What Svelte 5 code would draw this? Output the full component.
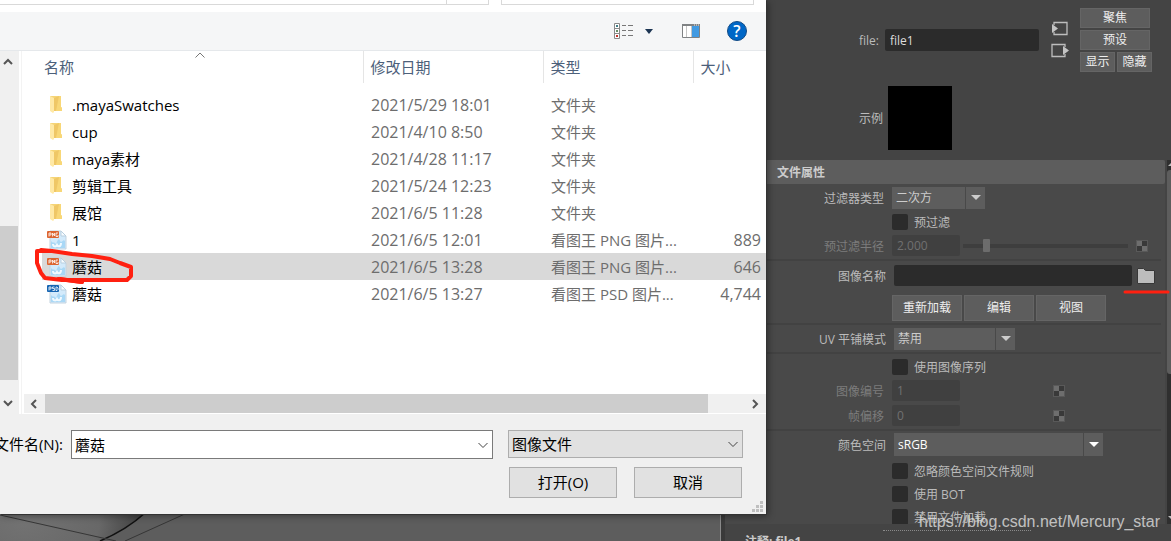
<script>
  const files = [
    { name: '.mayaSwatches', date: '2021/5/29 18:01', type: '文件夹', size: '', icon: 'folder' },
    { name: 'cup', date: '2021/4/10 8:50', type: '文件夹', size: '', icon: 'folder' },
    { name: 'maya素材', date: '2021/4/28 11:17', type: '文件夹', size: '', icon: 'folder' },
    { name: '剪辑工具', date: '2021/5/24 12:23', type: '文件夹', size: '', icon: 'folder' },
    { name: '展馆', date: '2021/6/5 11:28', type: '文件夹', size: '', icon: 'folder' },
    { name: '1', date: '2021/6/5 12:01', type: '看图王 PNG 图片...', size: '889', icon: 'png' },
    { name: '蘑菇', date: '2021/6/5 13:28', type: '看图王 PNG 图片...', size: '646', icon: 'png' },
    { name: '蘑菇', date: '2021/6/5 13:27', type: '看图王 PSD 图片...', size: '4,744', icon: 'psd' }
  ];

  let selected = $state(6);
  let fileName = $state('蘑菇');
  let nodeName = $state('file1');
  let imageName = $state('');

  function selectFile(i) {
    selected = i;
    fileName = files[i].name;
  }
</script>

{#snippet chevron(d)}
  <svg class="chevron" width="12" height="12" viewBox="0 0 12 12"><path {d} /></svg>
{/snippet}

{#snippet checker()}
  <svg class="checker" width="12" height="12" viewBox="0 0 12 12">
    <rect width="12" height="12" fill="#595959" />
    <path d="M1 1h5v5h-5zM6 6h5v5h-5z" fill="#6e6e6e" />
    <path d="M6 1h5v5h-5zM1 6h5v5h-5z" fill="#393939" />
  </svg>
{/snippet}

{#snippet fileIcon(kind)}
  {#if kind === 'folder'}
    <svg width="20" height="20" viewBox="0 0 20 20">
      <path d="M3 1h11v11l1 1v3H6z" fill="#f5d477" />
      <path d="M6 3l5-2h3v11l1 1v3H6z" fill="#f8d777" />
      <path d="M7 3v13h2l3-15z" fill="#efc766" />
      <path d="M3 1l4 2v14l-1 1-3-2z" fill="#ffe9a6" />
    </svg>
  {:else}
    <svg width="20" height="20" viewBox="0 0 20 20">
      <path d="M3 1h11l5 5v13H3z" fill="#d3eafb" stroke="#c3d3df" stroke-width="1" />
      <path d="M14 1v5h5z" fill="#f8fcff" stroke="#b9cfdf" stroke-width="1" />
      <path d="M4 11c2 3 3 0 5 3 2-5 3-6 4-3 2 3 3-3 5 0v7H4z" fill="#a9d8f6" />
      <path d="M6 14c0 3 3 3 4 1 1 2 4 2 4-2" fill="none" stroke="#f2faff" stroke-width="2" />
      <rect x="0" y="1" width="12" height="7" rx="1" fill={kind === 'png' ? '#dc6430' : '#1665b2'} />
      {#if kind === 'png'}
        <path d="M2 6.500V3h2v2H2M5.500 6.500V3L7.500 6V3M11 3H9v3.500h2V5" fill="none" stroke="#fff" stroke-width=".8" />
      {:else}
        <path d="M2 6.500V3h2v2H2M7.500 3H5.500v1.500h2V6.500h-2M9 3h1l1 1v1.500l-1 1H9z" fill="none" stroke="#fff" stroke-width=".8" />
      {/if}
    </svg>
  {/if}
{/snippet}

<div class="desktop">
  <div class="viewport">
    <svg width="718" height="28" viewBox="0 0 718 28">
      <defs>
        <radialGradient id="ball" gradientUnits="userSpaceOnUse" cx="24" cy="10" r="125" gradientTransform="matrix(1 0 0 .6 0 4)">
          <stop offset="0" stop-color="#727272" />
          <stop offset=".6" stop-color="#686868" />
          <stop offset="1" stop-color="#3a3a3a" />
        </radialGradient>
      </defs>
      <path d="M0 0H145C134 10 119 20 100 28H0z" fill="url(#ball)" />
      <path d="M145 0C134 10 119 20 100 28" fill="none" stroke="#111" stroke-width="1.500" />
      <path d="M0 2L116 28M187 0L125 28" fill="none" stroke="#363636" />
    </svg>
  </div>

  <aside class="editor">
    <header class="node">
      <div class="node-row">
        <label class="node-label" for="node">file:</label>
        <input id="node" class="field node-name" bind:value={nodeName} />
        <div class="links">
          <button class="bare" aria-label="转到输入连接">
            <svg width="18" height="15" viewBox="0 0 18 15">
              <path d="M3 4V1.500h13v12H3V11" fill="none" stroke="#bdbdbd" stroke-width="1.300" />
              <path d="M1 3v9l6-4.500z" fill="#c4c4c4" />
            </svg>
          </button>
          <button class="bare" aria-label="转到输出连接">
            <svg width="18" height="15" viewBox="0 0 18 15">
              <path d="M14 4V1.500H1v12h13V11" fill="none" stroke="#bdbdbd" stroke-width="1.300" />
              <path d="M12 3v9l6-4.500z" fill="#c4c4c4" />
            </svg>
          </button>
        </div>
        <div class="node-buttons">
          <button class="btn">聚焦</button>
          <button class="btn">预设</button>
          <div class="pair">
            <button class="btn">显示</button>
            <button class="btn">隐藏</button>
          </div>
        </div>
      </div>
      <div class="sample">
        <span class="sample-label">示例</span>
        <div class="swatch"></div>
      </div>
    </header>

    <div class="scroll">
      <section class="attrs">
        <h2>文件属性</h2>
        <div class="row">
          <label class="name" for="filter">过滤器类型</label>
          <div class="combo filter">
            <select id="filter"><option>二次方</option></select>
            <span class="arrow"></span>
          </div>
        </div>
        <div class="row check">
          <span class="name"></span>
          <label><input type="checkbox" />预过滤</label>
        </div>
        <div class="row off">
          <label class="name" for="radius">预过滤半径</label>
          <input id="radius" class="field num" value="2.000" disabled />
          <input type="range" aria-label="预过滤半径" min="0" max="16" value="2" disabled />
          {@render checker()}
        </div>
        <hr />
        <div class="row tall">
          <label class="name wide" for="image">图像名称</label>
          <input id="image" class="field image" bind:value={imageName} />
          <button class="bare" aria-label="浏览">
            <svg width="18" height="16" viewBox="0 0 18 16">
              <path d="M.5 .5h6l2 2h9v13H.5z" fill="#bdbdbd" stroke="#383838" />
            </svg>
          </button>
        </div>
        <div class="row actions">
          <span class="name"></span>
          <div class="pair">
            <button class="btn">重新加载</button>
            <button class="btn">编辑</button>
            <button class="btn">视图</button>
          </div>
        </div>
        <hr />
        <div class="row">
          <label class="name wide" for="tiling">UV 平铺模式</label>
          <div class="combo tiling">
            <select id="tiling"><option>禁用</option></select>
            <span class="arrow"></span>
          </div>
        </div>
        <hr />
        <div class="row check">
          <span class="name"></span>
          <label><input type="checkbox" />使用图像序列</label>
        </div>
        <div class="row off">
          <label class="name" for="number">图像编号</label>
          <input id="number" class="field num spaced" value="1" disabled />
          {@render checker()}
        </div>
        <div class="row off">
          <label class="name" for="offset">帧偏移</label>
          <input id="offset" class="field num spaced" value="0" disabled />
          {@render checker()}
        </div>
        <hr />
        <div class="row">
          <label class="name wide" for="space">颜色空间</label>
          <div class="combo space">
            <select id="space"><option>sRGB</option></select>
            <span class="arrow"></span>
          </div>
        </div>
        <div class="row check last">
          <span class="name"></span>
          <label><input type="checkbox" />忽略颜色空间文件规则</label>
        </div>
        <div class="row check">
          <span class="name"></span>
          <label><input type="checkbox" />使用 BOT</label>
        </div>
        <div class="row check">
          <span class="name"></span>
          <label><input type="checkbox" />禁用文件加载</label>
        </div>
      </section>
      <div class="track">
        <svg width="5" height="10" viewBox="0 0 5 10"><path d="M1 6L5 2v4z" fill="#bbb" /></svg>
        <div class="thumb"></div>
        <svg width="5" height="10" viewBox="0 0 5 10"><path d="M1 2h4v4z" fill="#bbb" /></svg>
      </div>
    </div>

    <footer class="notes">
      <div class="grip"></div>
      <strong>注释: file1</strong>
    </footer>
  </aside>

  <div class="dialog" role="dialog" aria-label="打开">
    <div class="address">
      <div class="path"><span></span></div>
      <div class="search"></div>
    </div>

    <div class="toolbar">
      <button class="bare" aria-label="更改视图">
        <svg width="19" height="17" viewBox="0 0 19 17">
          <path d="M.5 .5h5v15h-5zM.5 5.500h5M.5 10.500h5" fill="#fff" stroke="#8a8a8a" />
          <path d="M8 2.500h4m2 0h5M8 7.500h4m2 0h5M8 12.500h4m2 0h5" stroke="#777" />
          <path d="M2 2h2v2H2z" fill="#3f7c86" />
          <path d="M2 7h2v2H2z" fill="#69906a" />
          <path d="M2 12h2v2H2z" fill="#c4342c" />
        </svg>
      </button>
      <button class="bare more" aria-label="更多选项">
        <svg width="8" height="5" viewBox="0 0 8 5"><path d="M0 0h8L4 5z" fill="#1c3553" /></svg>
      </button>
      <button class="bare preview" aria-label="显示预览窗格">
        <svg width="18" height="14" viewBox="0 0 18 14">
          <path d="M.5 .5h17v13H.5z" fill="#fff" stroke="#7f8284" />
          <path d="M0 0h18v2H0z" fill="#7f8284" />
          <path d="M12 1h1M14 1h1M16 1h1" stroke="#eee" />
          <path d="M4.500 2v11M9.500 2v11" stroke="#c5c5c5" />
          <path d="M10 2h7v11h-7z" fill="#419ae2" />
        </svg>
      </button>
      <button class="bare" aria-label="获取帮助"><span class="help">?</span></button>
    </div>

    <div class="browser">
      <div class="tree">
        {@render chevron('M2 9L6 5l4 4')}
        <div class="tree-thumb"></div>
        {@render chevron('M2 4l4 4 4-4')}
      </div>
      <div class="list">
        <table>
          <thead>
            <tr>
              <th class="col-name">名称
                <svg class="sort" width="10" height="6" viewBox="0 0 10 6"><path d="M.5 5.500L5 1l4.500 4.500" fill="none" stroke="#777" /></svg>
              </th>
              <th class="col-date">修改日期</th>
              <th class="col-type">类型</th>
              <th>大小</th>
            </tr>
          </thead>
          <tbody>
            {#each files as file, i}
              <tr class:selected={selected === i} onclick={() => selectFile(i)}>
                <td><div class="file">{@render fileIcon(file.icon)}<span>{file.name}</span></div></td>
                <td class="date">{file.date}</td>
                <td>{file.type}</td>
                <td class="size">{file.size}</td>
              </tr>
            {/each}
          </tbody>
        </table>
        <div class="hscroll">
          {@render chevron('M8 2L4 6l4 4')}
          <div class="hthumb"></div>
          {@render chevron('M4 2l4 4-4 4')}
        </div>
      </div>
    </div>

    <div class="bottom">
      <div class="name-row">
        <label for="filename">文件名(N):</label>
        <div class="filename">
          <input id="filename" bind:value={fileName} />
          {@render chevron('M1.500 4L6 8.500 10.500 4')}
        </div>
        <div class="filetype">
          <select aria-label="文件类型"><option>图像文件</option></select>
          {@render chevron('M1.500 4L6 8.500 10.500 4')}
        </div>
      </div>
      <div class="buttons">
        <button>打开(O)</button>
        <button>取消</button>
      </div>
      <svg class="resize" width="12" height="12" viewBox="0 0 12 12">
        <path d="M8 0h3v3H8zM4 4h3v3H4zM8 4h3v3H8zM0 8h3v3H0zM4 8h3v3H4zM8 8h3v3H8z" fill="#bfbfbf" />
      </svg>
    </div>

    <svg class="mark" width="102" height="40" viewBox="0 0 102 40">
      <path d="M13 6L5 6 5 18 9 28 13 33 30 35H95L99 31 99 22 88 18 78 14 60 11 40 9 20 6 9 5M26 34L50 37" />
      <path d="M28 34L50 37" />
    </svg>
  </div>

  <svg class="underline" width="47" height="6" viewBox="0 0 47 6"><path d="M2 3H45" /></svg>
  <div class="watermark">https://blog.csdn.net/Mercury_star</div>
</div>

<style>
  :global(body) {
    background: #444;
  }

  .desktop {
    position: relative;
    display: flex;
    height: 100vh;
    overflow: hidden;
    font-family: 'Open Sans', 'Noto Sans CJK SC', sans-serif;
    font-size: 12px;
    color: #bbb;
  }

  button, input, select {
    font: inherit;
    color: inherit;
    box-sizing: border-box;
    margin: 0;
  }

  .bare {
    display: flex;
    padding: 0;
    border: 0;
    background: none;
  }

  select {
    appearance: none;
    border: 0;
    border-radius: 0;
    opacity: 1;
  }

  /* 3D viewport behind the dialog */
  .viewport {
    flex: 1;
    display: flex;
    align-items: flex-end;
    min-width: 0;
    overflow: hidden;
    background: #5d5d5d;
    border-right: 1px solid #8a8a8a;
  }

  /* attribute editor */
  .editor {
    display: flex;
    flex-direction: column;
    width: 450px;
    box-sizing: border-box;
    border-left: 4px solid #3a3a3a;
    background: #444;
  }

  .node {
    height: 160px;
    box-sizing: border-box;
    padding: 8px 19px 0 41px;
  }

  .node-row {
    display: flex;
    align-items: center;
    height: 64px;
  }

  .node-label, .sample-label {
    width: 113px;
    margin-right: 6px;
    text-align: right;
    font-size: 12px;
  }

  .sample-label {
    width: 117px;
    margin-right: 5px;
  }

  .field {
    height: 21px;
    padding: 0 5px;
    border: 0;
    border-radius: 2px;
    background: #2b2b2b;
    color: #ddd;
  }

  .node-name {
    width: 154px;
    height: 22px;
    font-size: 12px;
  }

  .links {
    display: flex;
    flex-direction: column;
    gap: 7px;
    margin: 0 1px 2px 12px;
  }

  .node-buttons {
    display: flex;
    flex-direction: column;
    gap: 2px;
    margin-left: 10px;
  }

  .btn {
    width: 70px;
    height: 20px;
    padding: 0;
    border: 1px solid #656565;
    background: #5d5d5d;
    color: #eee;
    line-height: 18px;
  }

  .pair {
    display: flex;
    gap: 2px;
  }

  .node-buttons .pair .btn {
    width: 35px;
  }

  .sample {
    display: flex;
    align-items: center;
    margin-top: 14px;
  }

  .swatch {
    width: 64px;
    height: 64px;
    background: #000;
  }

  .scroll {
    flex: 1;
    display: flex;
    gap: 2px;
    min-height: 0;
    overflow: hidden;
    background: #444;
  }

  .attrs {
    flex: 1;
    background: #494949;
  }

  h2 {
    height: 24px;
    margin: 0 0 1px;
    padding-left: 52px;
    border-radius: 2px;
    background: #5d5d5d;
    color: #ccc;
    font-size: 12px;
    line-height: 25px;
  }

  .row {
    display: flex;
    align-items: center;
    height: 25px;
    padding-left: 41px;
  }

  .row.check {
    height: 23px;
  }

  .row.last {
    padding-top: 2px;
  }

  .row.tall {
    height: 27px;
  }

  .name {
    width: 118px;
    margin-right: 8px;
    text-align: right;
  }

  .name.wide {
    width: 120px;
  }

  .off {
    color: #7c7c7c;
  }

  .off .field {
    background: #404040;
    color: #707070;
  }

  .num {
    width: 68px;
    font-size: 12px;
  }

  .spaced {
    margin-right: 93px;
  }

  .check label {
    display: flex;
    align-items: center;
    gap: 6px;
  }

  input[type='checkbox'] {
    appearance: none;
    width: 16px;
    height: 16px;
    border-radius: 2px;
    background: #2b2b2b;
  }

  input[type='checkbox']:checked {
    background: #5285a6;
  }

  input[type='range'] {
    appearance: none;
    width: 165px;
    height: 16px;
    margin: 0 8px 0 3px;
    background: linear-gradient(#3e3e3e, #3e3e3e) center / 100% 4px no-repeat;
  }

  input[type='range']::-webkit-slider-thumb {
    appearance: none;
    width: 7px;
    height: 13px;
    border-radius: 1px;
    background: #6c6c6c;
  }

  hr {
    height: 2px;
    margin: 1px 4px 1px 0;
    border: 0;
    background: #424242;
  }

  .image {
    width: 238px;
    margin-right: 5px;
  }

  .row.actions {
    height: 33px;
    box-sizing: border-box;
    padding-top: 4px;
  }

  .actions .btn {
    height: 26px;
  }

  .combo {
    display: grid;
  }

  .combo select, .arrow {
    grid-area: 1 / 1;
  }

  .combo select {
    height: 22px;
    padding: 0 4px;
    background: #5d5d5d;
    color: #ccc;
    line-height: 18px;
  }

  .arrow {
    display: flex;
    align-items: center;
    justify-content: center;
    justify-self: end;
    width: 20px;
    border-left: 1px solid #494949;
    box-sizing: border-box;
    pointer-events: none;
  }

  .arrow::before {
    content: '';
    border: 5px solid transparent;
    border-top-color: #ccc;
    border-bottom: 0;
  }

  .filter {
    width: 93px;
  }

  .tiling {
    width: 121px;
  }

  .space {
    width: 209px;
  }

  .space select {
    height: 23px;
    color: #fff;
  }

  .space .arrow::before {
    border-top-color: #fff;
  }

  .track {
    display: flex;
    flex-direction: column;
    width: 4px;
    background: #2f2f2f;
  }

  .thumb {
    height: 204px;
    margin-bottom: auto;
    border-radius: 3px 0 0 3px;
    background: #5d5d5d;
  }

  .notes {
    height: 17px;
    padding-left: 20px;
    color: #ccc;
    white-space: nowrap;
  }

  .notes strong {
    display: block;
    line-height: 22px;
  }

  .grip {
    width: 148px;
    height: 6px;
    margin-left: 138px;
    border-bottom: 1px dotted #8a8a8a;
  }

  /* file dialog */
  .dialog {
    position: absolute;
    top: 0;
    left: 0;
    right: 405px;
    background: #fff;
    box-shadow: 1px 1px 0 #333, 2px 2px 7px rgba(0, 0, 0, 0.4);
    color: #000;
    font-size: 15px;
  }

  .address {
    display: flex;
    gap: 12px;
    height: 12px;
    padding-right: 12px;
  }

  .path, .search {
    height: 4px;
    border: 1px solid #d9d9d9;
    border-top: 0;
  }

  .path {
    flex: 1;
    display: flex;
    justify-content: flex-end;
    border-left: 0;
  }

  .path span {
    width: 41px;
    border-left: 1px solid #d9d9d9;
  }

  .search {
    width: 251px;
  }

  .toolbar {
    display: flex;
    align-items: center;
    justify-content: flex-end;
    height: 38px;
    padding-right: 19px;
    border-bottom: 1px solid #e5e8eb;
    background: #f5f6f7;
  }

  .more {
    margin-left: 12px;
  }

  .preview {
    margin: 0 27px 0 29px;
  }

  .help {
    width: 18px;
    height: 18px;
    border: 1px solid #134b86;
    border-radius: 50%;
    background: #0067c7;
    color: #fff;
    font-size: 16px;
    font-weight: 600;
    line-height: 18px;
    text-align: center;
  }

  .browser {
    display: flex;
    height: 363px;
  }

  .chevron {
    flex: none;
    fill: none;
    stroke: #555;
    stroke-width: 2;
  }

  .tree {
    display: flex;
    flex-direction: column;
    width: 19px;
    box-sizing: border-box;
    padding: 4px 1px 5px 0;
    background: #f0f0f0;
  }

  .tree .chevron {
    margin-left: 2px;
  }

  .tree-thumb {
    height: 154px;
    margin: auto 0 17px;
    background: #cdcdcd;
  }

  .list {
    flex: 1;
    display: flex;
    flex-direction: column;
    justify-content: space-between;
    margin-left: 2px;
    border-left: 1px solid #f3f3f3;
  }

  table {
    width: calc(100% - 20px);
    margin-left: 20px;
    border-collapse: collapse;
    table-layout: fixed;
  }

  th {
    height: 30px;
    padding: 0 7px 2px;
    border-left: 1px solid #e5e5e5;
    color: #4c607a;
    font-weight: normal;
    text-align: left;
  }

  .col-name {
    position: relative;
    width: 321px;
    box-sizing: border-box;
    padding-left: 2px;
    border-left: 0;
  }

  .sort {
    position: absolute;
    top: 1px;
    left: 50%;
    margin-left: -7px;
  }

  .col-date {
    width: 180px;
    box-sizing: border-box;
  }

  .col-type {
    width: 150px;
    box-sizing: border-box;
  }

  tbody::before {
    content: '';
    display: block;
    height: 8px;
  }

  td {
    height: 27px;
    padding: 0 0 0 8px;
    color: #6d6d6d;
    line-height: 20px;
    white-space: nowrap;
  }

  td:first-child {
    padding-left: 5px;
    color: #000;
  }

  .selected {
    background: #d9d9d9;
  }

  .file {
    display: flex;
    align-items: center;
    gap: 5px;
  }

  .date {
    font-size: 16px;
  }

  td.size {
    padding: 0 5px 0 0;
    font-size: 16px;
    text-align: right;
  }

  .hscroll {
    display: flex;
    align-items: center;
    justify-content: space-between;
    height: 19px;
    margin: 0 0 1px 2px;
    padding: 0 5px 0 4px;
    background: #f0f0f0;
  }

  .hthumb {
    flex: 1;
    height: 19px;
    margin: 0 41px 0 5px;
    background: #cdcdcd;
  }

  .bottom {
    position: relative;
    padding: 16px 24px 16px 0;
    background: #f0f0f0;
  }

  .name-row {
    display: flex;
    align-items: flex-start;
    margin-right: -1px;
  }

  .name-row label {
    display: flex;
    justify-content: flex-end;
    width: 63px;
    margin-right: 8px;
    line-height: 28px;
    white-space: nowrap;
  }

  .filename {
    flex: 1;
    display: flex;
    align-items: center;
    padding-right: 3px;
    border: 1px solid #7a7a7a;
    background: #fff;
  }

  .filename input {
    flex: 1;
    min-width: 0;
    height: 27px;
    padding: 0 3px 1px;
    border: 0;
    background: none;
  }

  .filename .chevron, .filetype .chevron {
    stroke: #444;
    stroke-width: 1;
  }

  .filetype {
    display: grid;
    align-items: center;
    width: 235px;
    margin-left: 15px;
  }

  .filetype select, .filetype .chevron {
    grid-area: 1 / 1;
  }

  .filetype select {
    height: 28px;
    padding: 0 3px;
    border: 1px solid #adadad;
    background: #e1e1e1;
  }

  .filetype .chevron {
    justify-self: end;
    margin-right: 4px;
    pointer-events: none;
  }

  .buttons {
    display: flex;
    justify-content: flex-end;
    gap: 17px;
    margin-top: 8px;
  }

  .buttons button {
    width: 108px;
    height: 31px;
    padding: 0 0 2px;
    border: 1px solid #adadad;
    background: #e1e1e1;
  }

  .resize {
    position: absolute;
    right: 2px;
    bottom: 1px;
  }

  /* pen marks and watermark on top of everything */
  .mark, .underline {
    position: absolute;
    fill: none;
    stroke: #ff2010;
    stroke-width: 4;
    stroke-linecap: round;
    stroke-linejoin: round;
    pointer-events: none;
  }

  .mark {
    top: 245px;
    left: 32px;
  }

  .underline {
    top: 289px;
    right: 1px;
    stroke-width: 3;
  }

  .watermark {
    position: absolute;
    right: 11px;
    bottom: 9px;
    color: rgba(225, 225, 225, 0.8);
    font-family: 'Liberation Sans', sans-serif;
    font-size: 16px;
    line-height: 20px;
    pointer-events: none;
  }
</style>
